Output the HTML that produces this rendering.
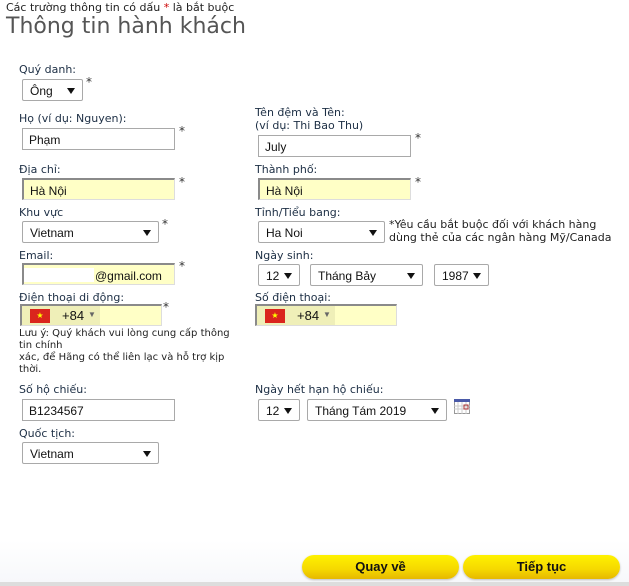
<!DOCTYPE html>
<html><head><meta charset="utf-8"><style>
body{margin:0;width:629px;height:586px;background:#fff;position:relative;overflow:hidden;font-family:"DejaVu Sans","Liberation Sans",sans-serif;font-size:11px;color:#1c2e44}
.a{position:absolute;white-space:nowrap}
.lb{position:absolute;white-space:nowrap;font-size:11px;color:#1c2e44}
.in{position:absolute;box-sizing:border-box;height:22px;border:1px solid #a9a9a9;background:#fff;font-family:"Liberation Sans",sans-serif;font-size:12px;color:#111;padding:4px 0 0 6px}
.y{background:#ffffc6;border-top:2px solid #8a8a8a;border-left:2px solid #8a8a8a;border-right:1px solid #ddd;border-bottom:1px solid #ddd}
.sel{position:absolute;box-sizing:border-box;height:22px;border:1px solid #a9a9a9;border-radius:2px;background:#fff;font-family:"Liberation Sans",sans-serif;font-size:12px;color:#111;padding:4px 0 0 7px}
.sel:after{content:"";position:absolute;right:7px;top:8px;border-left:4px solid transparent;border-right:4px solid transparent;border-top:6px solid #111}
.st{position:absolute;font-size:12px;color:#333}
.flag{position:absolute;width:20px;height:14px;background:#da251d;color:#ff0;font-size:8px;line-height:14px;text-align:center}
.btn{position:absolute;top:555px;height:24px;width:157px;border-radius:12px;background:linear-gradient(#fff200,#f5d800 60%,#e6b800);box-shadow:0 1px 2px #bbb;text-align:center;font-family:"Liberation Sans",sans-serif;font-weight:bold;font-size:13px;line-height:24px;color:#111}
</style></head><body>
<div class="a" style="left:6px;top:1px;font-size:11px;color:#222">Các trường thông tin có dấu <span style="color:#c00">*</span> là bắt buộc</div>
<div class="a" style="left:6px;top:14px;font-size:22px;color:#555">Thông tin hành khách</div>

<div class="lb" style="left:19px;top:63px">Quý danh:</div>
<div class="sel" style="left:22px;top:79px;width:61px">Ông</div>
<div class="st" style="left:86px;top:75px">*</div>

<div class="lb" style="left:19px;top:112px">Họ (ví dụ: Nguyen):</div>
<div class="in" style="left:22px;top:128px;width:153px">Phạm</div>
<div class="st" style="left:179px;top:124px">*</div>

<div class="lb" style="left:255px;top:106px;line-height:13px">Tên đệm và Tên:<br>(ví dụ: Thi Bao Thu)</div>
<div class="in" style="left:258px;top:135px;width:153px">July</div>
<div class="st" style="left:415px;top:131px">*</div>

<div class="lb" style="left:19px;top:163px">Địa chỉ:</div>
<div class="in y" style="left:22px;top:178px;width:153px">Hà Nội</div>
<div class="st" style="left:179px;top:175px">*</div>
<div class="lb" style="left:255px;top:163px">Thành phố:</div>
<div class="in y" style="left:258px;top:178px;width:153px">Hà Nội</div>
<div class="st" style="left:415px;top:175px">*</div>

<div class="lb" style="left:19px;top:206px">Khu vực</div>
<div class="sel" style="left:22px;top:221px;width:137px">Vietnam</div>
<div class="st" style="left:162px;top:217px">*</div>
<div class="lb" style="left:255px;top:206px">Tỉnh/Tiểu bang:</div>
<div class="sel" style="left:258px;top:221px;width:127px">Ha Noi</div>
<div class="lb" style="left:389px;top:218px;line-height:13px;color:#222">*Yêu cầu bắt buộc đối với khách hàng<br>dùng thẻ của các ngân hàng Mỹ/Canada</div>

<div class="lb" style="left:19px;top:249px">Email:</div>
<div class="in y" style="left:22px;top:263px;width:153px;padding-left:0"><span style="display:inline-block;background:#fff;width:70px;height:14px;vertical-align:top;margin-top:-1px"></span><span style="position:absolute;left:71px;top:4px">@gmail.com</span></div>
<div class="st" style="left:179px;top:259px">*</div>
<div class="lb" style="left:255px;top:249px">Ngày sinh:</div>
<div class="sel" style="left:258px;top:264px;width:42px">12</div>
<div class="sel" style="left:310px;top:264px;width:113px">Tháng Bảy</div>
<div class="sel" style="left:434px;top:264px;width:55px">1987</div>

<div class="lb" style="left:19px;top:291px">Điện thoại di động:</div>
<div class="in y" style="left:20px;top:304px;width:142px;padding:0"><div style="position:absolute;left:0;top:0;width:78px;height:19px;background:#efefb8"></div><div class="flag" style="left:8px;top:3px">★</div><span style="position:absolute;left:40px;top:2px;font-size:13px">+84</span><span style="position:absolute;left:66px;top:4px;font-size:8px;color:#666">▼</span></div>
<div class="st" style="left:163px;top:300px">*</div>
<div class="lb" style="left:255px;top:291px">Số điện thoại:</div>
<div class="in y" style="left:255px;top:304px;width:142px;padding:0"><div style="position:absolute;left:0;top:0;width:78px;height:19px;background:#efefb8"></div><div class="flag" style="left:8px;top:3px">★</div><span style="position:absolute;left:40px;top:2px;font-size:13px">+84</span><span style="position:absolute;left:66px;top:4px;font-size:8px;color:#666">▼</span></div>

<div class="lb" style="left:19px;top:328px;line-height:12px;font-size:10px;color:#222">Lưu ý: Quý khách vui lòng cung cấp thông<br>tin chính<br>xác, để Hãng có thể liên lạc và hỗ trợ kịp<br>thời.</div>

<div class="lb" style="left:19px;top:383px">Số hộ chiếu:</div>
<div class="in" style="left:22px;top:399px;width:153px">B1234567</div>
<div class="lb" style="left:255px;top:383px">Ngày hết hạn hộ chiếu:</div>
<div class="sel" style="left:258px;top:399px;width:42px">12</div>
<div class="sel" style="left:307px;top:399px;width:140px">Tháng Tám 2019</div>
<svg class="a" style="left:454px;top:399px" width="16" height="15" viewBox="0 0 16 15"><rect x="0.5" y="0.5" width="15" height="14" fill="#fff" stroke="#999"/><rect x="0" y="0" width="16" height="3" fill="#4a5aa8"/><path d="M0 7H16M0 10H16M4 3V15M8 3V15M12 3V15" stroke="#ccc"/><rect x="10" y="6" width="4" height="4" fill="none" stroke="#a33"/></svg>

<div class="lb" style="left:19px;top:427px">Quốc tịch:</div>
<div class="sel" style="left:22px;top:442px;width:137px">Vietnam</div>

<div class="a" style="left:0;top:540px;width:629px;height:42px;background:linear-gradient(#fff,#f7f8fb)"></div>
<div class="btn" style="left:302px">Quay về</div>
<div class="btn" style="left:463px">Tiếp tục</div>
<div class="a" style="left:0;top:582px;width:629px;height:4px;background:#ddd"></div>
</body></html>
